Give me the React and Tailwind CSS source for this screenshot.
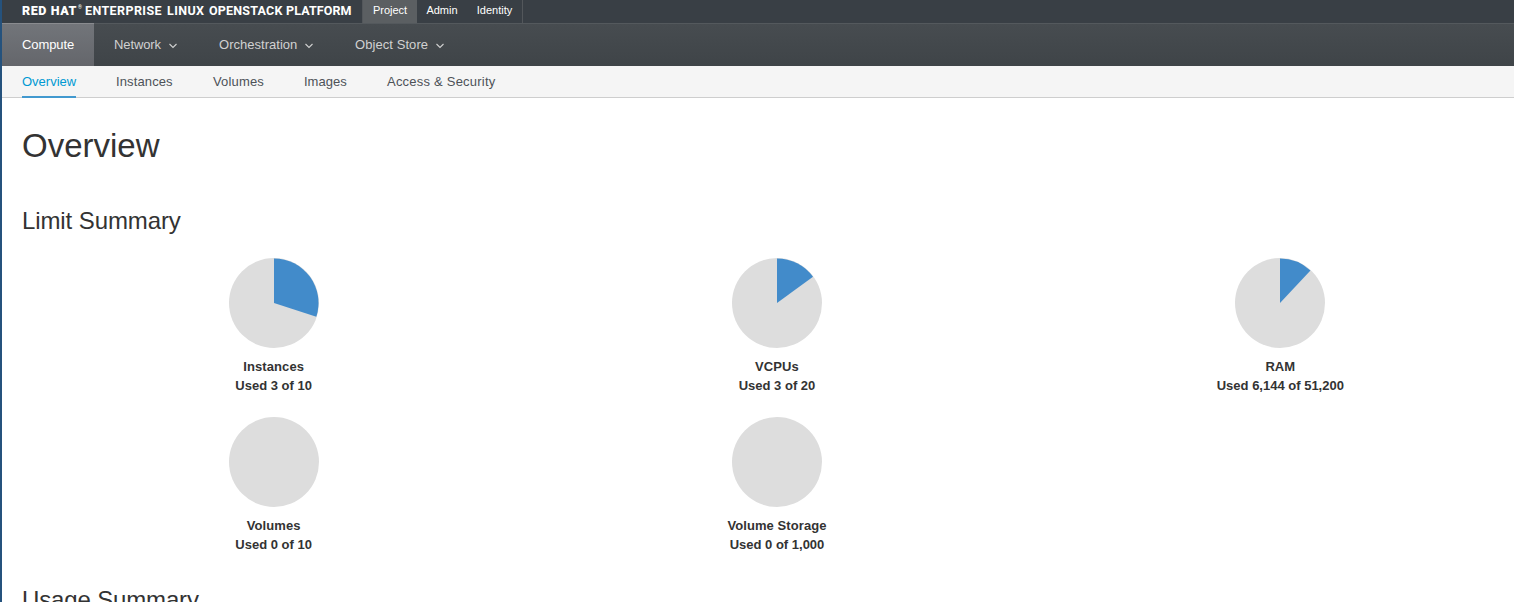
const FONT = "font-['Liberation_Sans',Arial,sans-serif]";

const topLinks = [
  { label: 'Project', style: 'w-[55px] bg-[#5b5f62] border-l border-[#53575b]' },
  { label: 'Admin', style: 'w-[50px]' },
  { label: 'Identity', style: 'w-[56px] border-r border-[#53575b]' },
];

const mainNav = [
  { label: 'Network', left: 'ml-[20px]', width: 'w-[47px] tracking-[-0.1px]' },
  { label: 'Orchestration', left: 'ml-[42px]', width: 'w-[78px] tracking-[0.02px]' },
  { label: 'Object Store', left: 'ml-[42px]', width: 'w-[73px] tracking-[0.07px]' },
];

const subNav = [
  { label: 'Overview', width: 'w-[54px]', active: true },
  { label: 'Instances', width: 'w-[57px] tracking-[0.12px]' },
  { label: 'Volumes', width: 'w-[51px] tracking-[0.15px]' },
  { label: 'Images', width: 'w-[43px]' },
  { label: 'Access & Security', width: 'w-[108px] tracking-[0.22px]' },
];

const limits = [
  { label: 'Instances', used: '3 of 10', ratio: 0.3 },
  { label: 'VCPUs', used: '3 of 20', ratio: 0.15 },
  { label: 'RAM', used: '6,144 of 51,200', ratio: 0.12 },
  { label: 'Volumes', used: '0 of 10', ratio: 0 },
  { label: 'Volume Storage', used: '0 of 1,000', ratio: 0 },
];

function Chevron() {
  return (
    <svg className="mt-[2px] ml-[8px] h-[6px] w-[8px]" viewBox="0 0 8 6" fill="none" stroke="#d1d1d1" strokeWidth="1.1">
      <path d="M0.5 1 L4 4.5 L7.5 1" />
    </svg>
  );
}

function Pie({ ratio }) {
  const angle = ratio * 2 * Math.PI;
  const x = 45 + 44.5 * Math.sin(angle);
  const y = 45 - 44.5 * Math.cos(angle);
  return (
    <svg className="h-[90px] w-[90px]" viewBox="0 0 90 90">
      <circle cx="45" cy="45" r="45" fill="#dddddd" />
      {ratio > 0 && <path d={`M45 45 V0.5 A44.5 44.5 0 0 1 ${x} ${y} Z`} fill="#428bca" />}
    </svg>
  );
}

export default function App() {
  return (
    <div className={`flex h-[602px] w-full overflow-hidden bg-white text-[#333333] ${FONT}`}>
      <div className="w-[2px] shrink-0 bg-[#25527d]" />
      <div className="min-w-0 flex-1 overflow-hidden">
        <header className="flex h-[23px] bg-[#393f45] pl-[20px] text-white">
          <div className="flex w-[340px] items-start whitespace-nowrap pt-[2px] font-['Roboto',sans-serif] text-[12.5px] leading-[17px] font-bold">
            <span className="w-[56px] font-black tracking-[0.6px]">RED HAT</span>
            <span className="w-[7px] text-[5px] leading-[10px]">®</span>
            <span className="w-[82px] tracking-[0.4px]">ENTERPRISE</span>
            <span className="w-[42px] tracking-[0.4px]">LINUX</span>
            <span className="w-[77px] tracking-[0.2px]">OPENSTACK</span>
            <span className="tracking-[0.1px]">PLATFORM</span>
          </div>
          {topLinks.map((l) => (
            <a key={l.label} className={`flex justify-center pt-[2px] text-[11px] leading-[17px] whitespace-nowrap ${l.style}`}>
              {l.label}
            </a>
          ))}
        </header>
        <nav className="flex h-[43px] items-stretch border-t border-[#54595d] bg-linear-to-b from-[#474c50] to-[#3f4448] text-[13px] leading-[20px] whitespace-nowrap text-[#d1d1d1]">
          <a className="-mt-px flex w-[92px] items-start border-t border-[#898b8f] bg-linear-to-b from-[#72757a] to-[#64666b] pt-[11px] pl-[20px] tracking-[-0.1px] text-white">Compute</a>
          {mainNav.map((n) => (
            <a key={n.label} className={`flex h-[42px] items-center ${n.left}`}>
              <span className={n.width}>{n.label}</span>
              <Chevron />
            </a>
          ))}
        </nav>
        <nav className="flex h-[32px] gap-[40px] border-b border-[#cecece] bg-[#f5f5f5] pl-[20px] text-[13px] leading-[20px] whitespace-nowrap text-[#4d5258]">
          {subNav.map((n) => (
            <a key={n.label} className={`h-[32px] pt-[6px] ${n.width} ${n.active ? 'border-b-2 border-[#4299cf] text-[#0099d3]' : ''}`}>
              {n.label}
            </a>
          ))}
        </nav>
        <main className="pl-[20px]">
          <h1 className="mt-[28px] h-[40px] text-[33px] leading-[40px] font-normal">Overview</h1>
          <h2 className="mt-[40px] h-[30px] text-[24px] leading-[30px] font-normal tracking-[-0.1px]">Limit Summary</h2>
          <section className="mt-[22px] grid w-[1510px] grid-cols-3">
            {limits.map((l) => (
              <div key={l.label} className="flex h-[159px] flex-col items-center text-[13px] leading-[19px] font-bold">
                <Pie ratio={l.ratio} />
                <div className="mt-[9px] tracking-[0.08px]">{l.label}</div>
                <div>Used {l.used}</div>
              </div>
            ))}
          </section>
          <h2 className="mt-[9px] h-[30px] text-[24px] leading-[30px] font-normal tracking-[-0.15px]">Usage Summary</h2>
        </main>
      </div>
    </div>
  );
}
